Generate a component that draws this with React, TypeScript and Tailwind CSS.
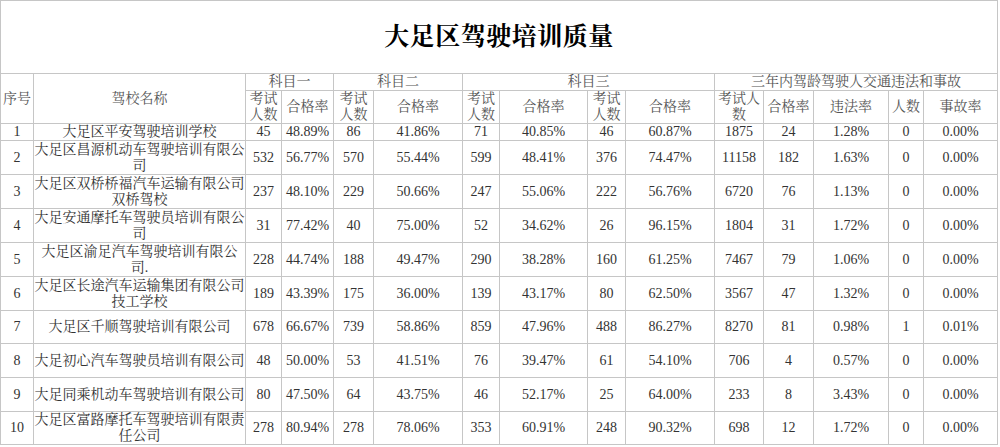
const rows = [
  ['1', '大足区平安驾驶培训学校', '45', '48.89%', '86', '41.86%', '71', '40.85%', '46', '60.87%', '1875', '24', '1.28%', '0', '0.00%'],
  ['2', '大足区昌源机动车驾驶培训有限公|司', '532', '56.77%', '570', '55.44%', '599', '48.41%', '376', '74.47%', '11158', '182', '1.63%', '0', '0.00%'],
  ['3', '大足区双桥桥福汽车运输有限公司|双桥驾校', '237', '48.10%', '229', '50.66%', '247', '55.06%', '222', '56.76%', '6720', '76', '1.13%', '0', '0.00%'],
  ['4', '大足安通摩托车驾驶员培训有限公|司', '31', '77.42%', '40', '75.00%', '52', '34.62%', '26', '96.15%', '1804', '31', '1.72%', '0', '0.00%'],
  ['5', '大足区渝足汽车驾驶培训有限公|司.', '228', '44.74%', '188', '49.47%', '290', '38.28%', '160', '61.25%', '7467', '79', '1.06%', '0', '0.00%'],
  ['6', '大足区长途汽车运输集团有限公司|技工学校', '189', '43.39%', '175', '36.00%', '139', '43.17%', '80', '62.50%', '3567', '47', '1.32%', '0', '0.00%'],
  ['7', '大足区千顺驾驶培训有限公司', '678', '66.67%', '739', '58.86%', '859', '47.96%', '488', '86.27%', '8270', '81', '0.98%', '1', '0.01%'],
  ['8', '大足初心汽车驾驶员培训有限公司', '48', '50.00%', '53', '41.51%', '76', '39.47%', '61', '54.10%', '706', '4', '0.57%', '0', '0.00%'],
  ['9', '大足同乘机动车驾驶培训有限公司', '80', '47.50%', '64', '43.75%', '46', '52.17%', '25', '64.00%', '233', '8', '3.43%', '0', '0.00%'],
  ['10', '大足区富路摩托车驾驶培训有限责|任公司', '278', '80.94%', '278', '78.06%', '353', '60.91%', '248', '90.32%', '698', '12', '1.72%', '0', '0.00%'],
];

const widths = [33, 212, 36, 52, 40, 89, 37, 88, 38, 89, 49, 50, 75, 35, 74];
const rowHeights = ['h-[17px]', 'h-[34px]', 'h-[34px]', 'h-[34px]', 'h-[34px]', 'h-[34px]', 'h-[33px]', 'h-[34px]', 'h-[34px]', 'h-[33px]'];

const cell = 'border border-[#c6c6c6] text-center align-middle p-0 leading-[16px]';

// names wrap where the sheet wraps them ("|" marks the break)
function Name({ text }: { text: string }) {
  const lines = text.split('|');
  return (
    <>
      {lines.map((l, i) => (
        <span key={i} className="block whitespace-nowrap">
          {l}
        </span>
      ))}
    </>
  );
}

export default function App() {
  return (
    <div className="bg-white w-[1000px] h-[447px] overflow-hidden text-[#333] [font-family:'Liberation_Serif','Noto_Serif_CJK_SC','Noto_Sans_CJK_SC',serif] text-[14px]">
      <table className="table-fixed border-collapse w-[997px]">
        <colgroup>
          {widths.map((w, i) => (
            <col key={i} style={{ width: w }} />
          ))}
        </colgroup>
        <tbody>
          <tr className="h-[73px]">
            <td colSpan={15} className="border border-[#c6c6c6] text-center align-middle p-0">
              <h1 className="text-[25px] font-bold text-black tracking-[0.5px]">大足区驾驶培训质量</h1>
            </td>
          </tr>
          <tr className="h-[17px] text-[#555]">
            <td rowSpan={2} className={cell}>序号</td>
            <td rowSpan={2} className={cell}>驾校名称</td>
            <td colSpan={2} className={cell}>科目一</td>
            <td colSpan={2} className={cell}>科目二</td>
            <td colSpan={4} className={cell}>科目三</td>
            <td colSpan={5} className={cell}>三年内驾龄驾驶人交通违法和事故</td>
          </tr>
          <tr className="h-[33px] text-[#555]">
            <td className={cell}>考试人数</td>
            <td className={cell}>合格率</td>
            <td className={cell}>考试人数</td>
            <td className={cell}>合格率</td>
            <td className={cell}>考试人数</td>
            <td className={cell}>合格率</td>
            <td className={cell}>考试人数</td>
            <td className={cell}>合格率</td>
            <td className={cell}>考试人数</td>
            <td className={cell}>合格率</td>
            <td className={cell}>违法率</td>
            <td className={cell}>人数</td>
            <td className={cell}>事故率</td>
          </tr>
          {rows.map((r, i) => (
            <tr key={r[0]} className={rowHeights[i]}>
              {r.map((v, j) => (
                <td key={j} className={cell}>
                  {j === 1 ? <Name text={v} /> : v}
                </td>
              ))}
            </tr>
          ))}
        </tbody>
      </table>
    </div>
  );
}
